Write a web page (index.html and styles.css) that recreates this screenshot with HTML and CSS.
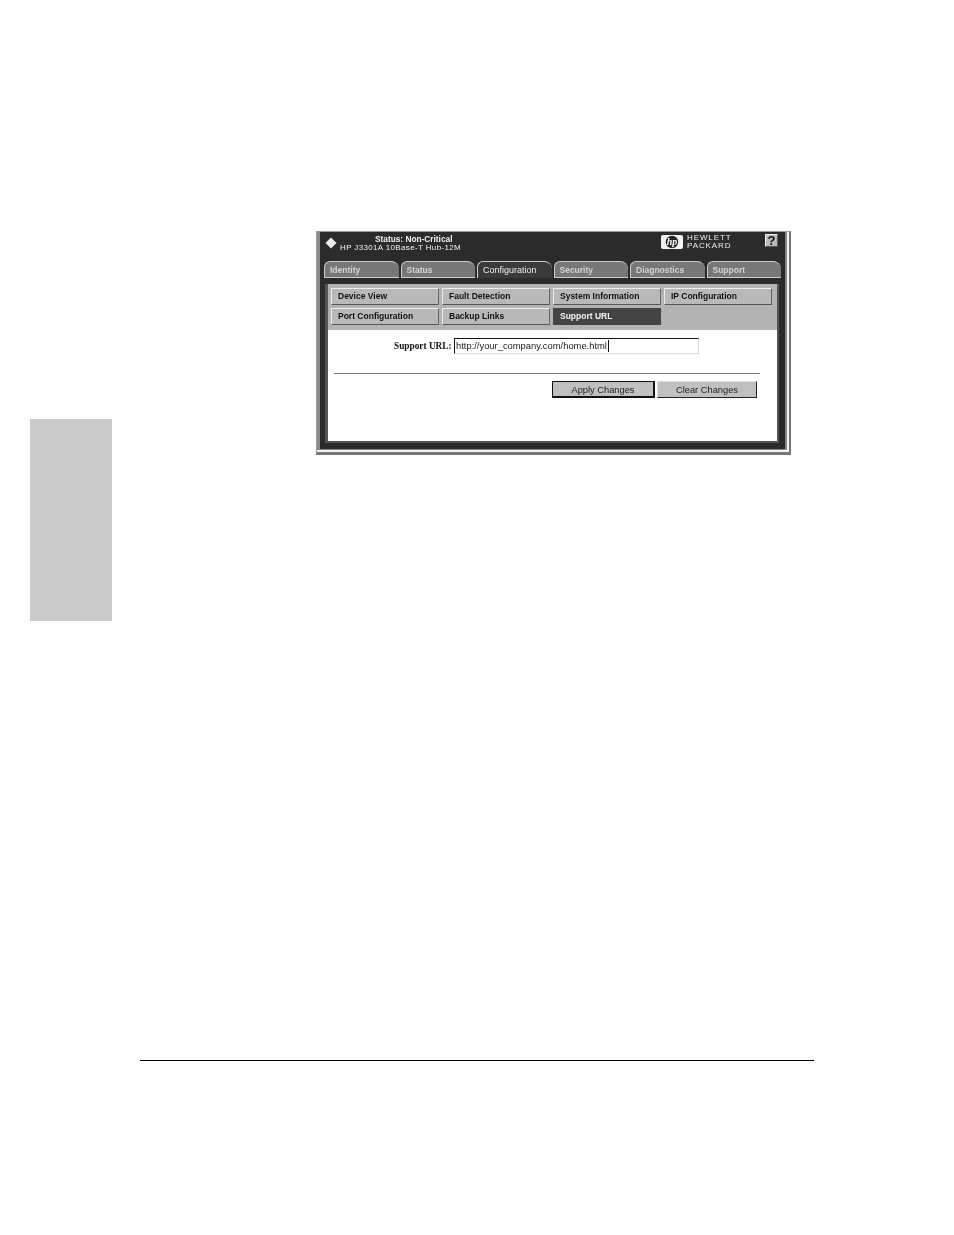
FILE: index.html
```html
<!DOCTYPE html>
<html lang="en">
<head>
    <meta charset="UTF-8">
    <title>Support URL</title>
    <link rel="stylesheet" href="styles.css">
</head>
<body>
    <div class="page">
        <div class="top">
            <div class="side-tab"></div>

            <!-- Screenshot of the hub's web interface -->
            <div class="figure">
                <div class="frame">
                    <div class="status-bar">
                        <svg class="status-icon" width="12" height="12" viewBox="0 0 12 12"><path d="M6 0.5 L11.5 6 L6 11.5 L0.5 6 Z" fill="#eee"/></svg>
                        <div class="status-text">
                            <div class="status-title">Status: Non-Critical</div>
                            <div class="status-device">HP J3301A 10Base-T Hub-12M</div>
                        </div>
                        <div class="hp-logo">
                            <svg width="22" height="14" viewBox="0 0 22 14">
                                <rect width="22" height="14" rx="2" fill="#f2f2f2"/>
                                <circle cx="11" cy="7" r="6.2" fill="#222"/>
                                <text x="11" y="10" text-anchor="middle" class="hp-mark">hp</text>
                            </svg>
                            <div class="hp-name">HEWLETT<br>PACKARD</div>
                        </div>
                        <div class="help">?</div>
                    </div>

                    <div class="tabs">
                        <div class="tab">Identity</div>
                        <div class="tab">Status</div>
                        <div class="tab active">Configuration</div>
                        <div class="tab">Security</div>
                        <div class="tab">Diagnostics</div>
                        <div class="tab">Support</div>
                    </div>

                    <div class="panel">
                        <div class="subnav">
                            <div class="subbtn">Device View</div>
                            <div class="subbtn">Fault Detection</div>
                            <div class="subbtn">System Information</div>
                            <div class="subbtn">IP Configuration</div>
                            <div class="subbtn">Port Configuration</div>
                            <div class="subbtn">Backup Links</div>
                            <div class="subbtn current">Support URL</div>
                        </div>

                        <div class="content">
                            <div class="url-row">
                                <label class="url-label">Support URL:</label>
                                <div class="url-input">http://your_company.com/home.html<span class="caret"></span></div>
                            </div>
                            <div class="divider"></div>
                            <div class="actions">
                                <div class="action default">Apply Changes</div>
                                <div class="action">Clear Changes</div>
                            </div>
                        </div>
                    </div>
                </div>
            </div>
        </div>

        <div class="footer-rule"></div>
    </div>
</body>
</html>
```

FILE: styles.css
```css
body {
    margin: 0;
    background-color: #fff;
    font-family: "Liberation Sans", Arial, sans-serif;
}

.page {
    width: 954px;
    height: 1235px;
    overflow: hidden;
}

.top {
    display: flex;
    height: 621px;
}

/* Grey thumb tab on the page edge */
.side-tab {
    width: 82px;
    height: 202px;
    margin: 419px 0 0 30px;
    background-color: #cbcbcb;
}

/* Figure */
.figure {
    width: 475px;
    height: 224px;
    margin: 231px 0 0 204px;
    box-sizing: border-box;
    border: 1px solid #9a9a9a;
    border-right: 2px solid #777;
    border-bottom: 3px solid #777;
    padding: 0 2px 2px 0;
    background-color: #f4f4f4;
    filter: blur(0.3px);
}

.frame {
    box-sizing: border-box;
    height: 100%;
    border-left: 3px solid #8a8a8a;
    border-right: 2px solid #888;
    border-bottom: 1px solid #888;
    background-color: #2b2b2b;
    padding: 0 6px 6px 5px;
    display: flex;
    flex-direction: column;
}

.status-bar {
    display: flex;
    align-items: flex-start;
    height: 29px;
    flex: none;
    color: #f0f0f0;
}

.status-icon {
    margin-top: 5px;
    flex: none;
}

.status-text {
    width: 285px;
    margin: 3px 0 0 3px;
    font-size: 8px;
    line-height: 8px;
}

.status-title {
    margin-left: 35px;
    font-size: 8.3px;
    font-weight: bold;
}

.status-device {
    margin-top: 1px;
    letter-spacing: 0.36px;
}

.hp-logo {
    display: flex;
    align-items: center;
    gap: 4px;
    margin: 2px 0 0 36px;
}

.hp-mark {
    font-family: "Liberation Serif", serif;
    font-size: 10px;
    font-style: italic;
    font-weight: bold;
    fill: #fff;
}

.hp-name {
    width: 45px;
    font-size: 8px;
    line-height: 7.5px;
    letter-spacing: 0.9px;
}

.help {
    width: 13px;
    height: 13px;
    margin: 2px 0 0 33px;
    background-color: #bbb;
    border: 1px solid #eee;
    border-right-color: #555;
    border-bottom-color: #555;
    box-sizing: border-box;
    color: #111;
    font-size: 13px;
    font-weight: bold;
    line-height: 11px;
    text-align: center;
}

/* Main tabs */
.tabs {
    display: flex;
    flex: none;
    gap: 2px;
    height: 17px;
    margin: 0 -2px 0 -1px;
}

.tab {
    flex: 1;
    box-sizing: border-box;
    padding: 3px 0 0 5px;
    background-color: #777;
    border-top: 1px solid #ccc;
    border-left: 1px solid #ccc;
    border-bottom: 1px solid #ccc;
    border-radius: 6px 8px 0 0;
    color: #d4d4d4;
    font-size: 8.5px;
    font-weight: bold;
    line-height: 11px;
}

.tab.active {
    background-color: #3a3a3a;
    border-bottom: none;
    color: #eee;
    font-size: 9px;
    font-weight: normal;
}

/* Everything under the tabs */
.panel {
    flex: 1;
    display: flex;
    flex-direction: column;
    margin-top: 6px;
    border-left: 3px solid #555;
    border-right: 2px solid #555;
    border-bottom: 2px solid #555;
}

/* Second-level buttons */
.subnav {
    flex: none;
    display: grid;
    grid-template-columns: repeat(4, 108px);
    grid-auto-rows: 17px;
    column-gap: 3px;
    row-gap: 3px;
    height: 46px;
    box-sizing: border-box;
    padding: 4px 0 0 3px;
    background-color: #b3b3b3;
}

.subbtn {
    box-sizing: border-box;
    padding-left: 6px;
    background-color: #b9b9b9;
    border: 1px solid #eee;
    border-right-color: #666;
    border-bottom-color: #555;
    color: #111;
    font-size: 8.5px;
    font-weight: bold;
    line-height: 15px;
}

.subbtn.current {
    background-color: #444;
    border-color: #444;
    color: #f4f4f4;
}

/* White form area */
.content {
    flex: 1;
    background-color: #fff;
    padding: 7px 17px 0 6px;
}

.url-row {
    display: flex;
    align-items: center;
    height: 17px;
}

.url-label {
    margin-left: 60px;
    width: 60px;
    font-family: "Liberation Serif", serif;
    font-size: 9.3px;
    font-weight: bold;
    color: #111;
    white-space: nowrap;
}

.url-input {
    box-sizing: border-box;
    width: 245px;
    height: 16px;
    padding-left: 1px;
    border: 1px solid #d8d8d8;
    border-top-color: #111;
    border-left-color: #111;
    color: #222;
    font-size: 9.4px;
    line-height: 14px;
}

.caret {
    display: inline-block;
    width: 1px;
    height: 12px;
    margin-left: 1px;
    vertical-align: top;
    margin-top: 1px;
    background-color: #111;
}

.divider {
    height: 1px;
    margin-top: 19px;
    background-color: #777;
}

.actions {
    display: flex;
    justify-content: flex-end;
    gap: 2px;
    margin: 7px 3px 0 0;
}

.action {
    box-sizing: border-box;
    width: 100px;
    height: 17px;
    background-color: #c0c0c0;
    border: 1px solid #ddd;
    border-right-color: #222;
    border-bottom-color: #222;
    color: #222;
    font-size: 9.3px;
    line-height: 16px;
    text-align: center;
}

.action.default {
    width: 103px;
    border: 1px solid #111;
    border-right-width: 2px;
    border-bottom-width: 2px;
}

.footer-rule {
    width: 674px;
    height: 1px;
    margin: 439px 0 0 140px;
    background-color: #000;
}
```
